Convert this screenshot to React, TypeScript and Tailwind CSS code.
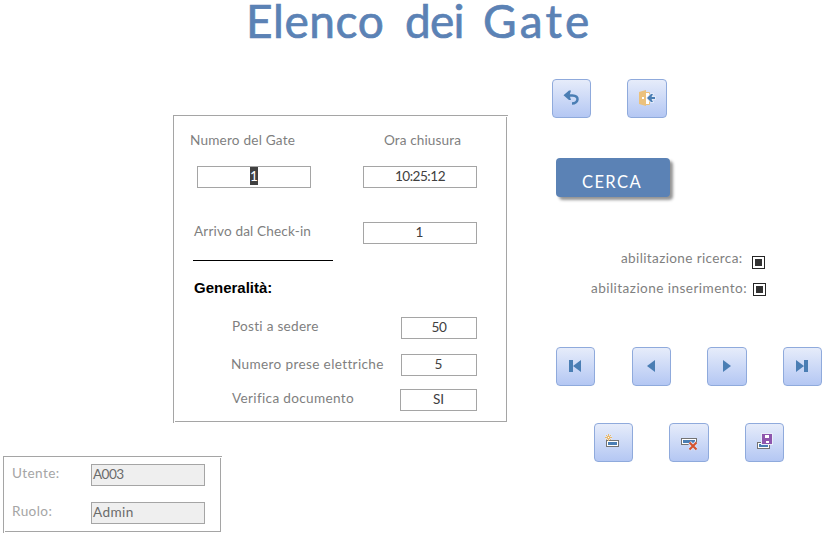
import type { ReactNode } from "react";

const BLUE = "#4a7eb4";

function Panel({ className, children }: { className: string; children: ReactNode }) {
  return (
    <section className={`relative border border-[#a5a5a5] ${className}`}>
      <i className="absolute -top-px -right-[2px] h-px w-px bg-[#a5a5a5]" />
      <i className="absolute top-0 -right-px h-px w-px bg-white" />
      <i className="absolute -bottom-[2px] -left-px h-px w-px bg-[#a5a5a5]" />
      <i className="absolute -bottom-px left-0 h-px w-px bg-white" />
      {children}
    </section>
  );
}

function Field({ className, children }: { className: string; children: ReactNode }) {
  return (
    <div className={`flex h-[22px] shrink-0 items-start border border-[#a5a5a5] text-[13.6px] leading-[18px] ${className}`}>
      {children}
    </div>
  );
}

function Label({ className, children }: { className: string; children: ReactNode }) {
  return <span className={`block h-[20px] shrink-0 whitespace-nowrap text-[13.6px] leading-[18px] [font-variant-ligatures:none] ${className}`}>{children}</span>;
}

function IconButton({ className = "", label, children }: { className?: string; label: string; children: ReactNode }) {
  return (
    <button
      aria-label={label}
      className={`h-[39px] w-[39px] shrink-0 rounded-[4px] border border-[#8faadc] bg-linear-to-b from-[#e6ecfa] to-[#b4c7f3] ${className}`}
    >
      <svg width="37" height="37" viewBox="1 1 37 37" className="block">
        {children}
      </svg>
    </button>
  );
}

function CheckBox({ className }: { className: string }) {
  return (
    <span className={`flex h-[13px] w-[13px] shrink-0 items-center justify-center border border-[#262626] bg-white ${className}`}>
      <i className="h-[7px] w-[7px] bg-[#333]" />
    </span>
  );
}

export default function App() {
  return (
    <main className="flex h-[534px] w-[825px] flex-col bg-white font-['Lato','Liberation_Sans',sans-serif] text-[#7f7f7f]">
      <h1 className="flex h-[54px] shrink-0 pl-[246px] text-[46px] leading-[42px] text-[#5b82b5] [-webkit-text-stroke:0.7px_#5b82b5]">
        <span className="w-[159px] tracking-[0.6px]">Elenco</span>
        <span className="w-[78px] tracking-[-0.8px]">dei</span>
        <span className="tracking-[3.2px]">Gate</span>
      </h1>
      <div className="flex">
        <div className="w-[552px] shrink-0 pt-[61px]">
          <Panel className="ml-[173px] h-[307px] w-[334px]">
            <div className="flex pt-[15px] pl-[16px]">
              <Label className="w-[194px] tracking-[0.2px]">Numero del Gate</Label>
              <Label className="tracking-[0.1px]">Ora chiusura</Label>
            </div>
            <div className="flex pt-[15px] pl-[23px]">
              <Field className="mr-[52px] w-[114px] justify-center">
                <span className="h-[18px] bg-[#404040] px-[0.3px] text-white">1</span>
              </Field>
              <Field className="w-[114px] justify-center tracking-[-0.5px] text-[#404040]">10:25:12</Field>
            </div>
            <div className="flex pt-[34px] pl-[20px]">
              <Label className="w-[169px] tracking-[0.15px]">Arrivo dal Check-in</Label>
              <Field className="w-[114px] justify-center pr-px text-[#404040]">1</Field>
            </div>
            <div className="mt-[16px] ml-[19px] h-px w-[140px] bg-black" />
            <h2 className="mt-[17px] ml-[20px] h-[20px] font-['Liberation_Sans',sans-serif] text-[15px] leading-[20px] font-bold text-black">
              Generalità:
            </h2>
            <div className="mt-[19px] ml-[58px] flex h-[22px]">
              <Label className="w-[169px] tracking-[0.27px]">Posti a sedere</Label>
              <Field className="w-[76px] justify-center tracking-[-0.4px] text-[#404040]">50</Field>
            </div>
            <div className="mt-[15px] ml-[57px] flex h-[22px]">
              <Label className="w-[170px] pt-px tracking-[0.35px]">Numero prese elettriche</Label>
              <Field className="w-[76px] justify-center pr-px text-[#404040]">5</Field>
            </div>
            <div className="mt-[13px] ml-[58px] flex h-[22px]">
              <Label className="w-[168px] tracking-[0.33px]">Verifica documento</Label>
              <Field className="w-[77px] justify-center text-[#404040]">SI</Field>
            </div>
          </Panel>
          <Panel className="mt-[34px] ml-[3px] h-[76px] w-[218px] text-[#a5a5a5]">
            <div className="flex pt-[7px] pl-[8px]">
              <Label className="w-[79px] tracking-[0.4px]">Utente:</Label>
              <Field className="w-[114px] bg-[#efefef] pl-px tracking-[-0.6px] text-[#6b6b6b]">A003</Field>
            </div>
            <div className="flex pt-[16px] pl-[8px]">
              <Label className="w-[79px] tracking-[0.4px]">Ruolo:</Label>
              <Field className="w-[114px] bg-[#efefef] pl-px tracking-[0.4px] text-[#6b6b6b]">Admin</Field>
            </div>
          </Panel>
        </div>

        <div className="w-[273px] shrink-0 pt-[25px]">
          <div className="flex gap-[36px]">
            <IconButton label="Annulla">
              <path d="M16 16.5H20.5C28 16.5 26.5 24.5 20 24.5" fill="none" stroke={BLUE} strokeWidth="2.5" />
              <path d="M11.5 16.2L17 11.5H19L17.5 16.2L19 21H17Z" fill={BLUE} />
            </IconButton>
            <IconButton label="Esci" className="w-[40px]">
              <path d="M18 13.5H22.5V25.5H18" fill="#fff" stroke="#ebc17d" />
              <path d="M12 13L19 11V27L12 25Z" fill="#ebc17d" />
              <rect x="15" y="18" width="2" height="2" fill="#fff" />
              <path d="M20 19L24 15H26L24.5 18H28V20H24.5L26 23H24Z" fill={BLUE} stroke="#e7edfa" strokeWidth="1.5" paintOrder="stroke" />
            </IconButton>
          </div>
          <button className="mt-[40px] ml-[4px] flex h-[39px] w-[114px] justify-center rounded-[4px] bg-[#5b82b5] pt-[14px] pr-[2px] text-[16.5px] leading-[20px] tracking-[1.4px] text-white shadow-[3px_3px_3px_rgba(0,0,0,0.42)]">
            CERCA
          </button>
          <div className="mt-[51px] ml-[69px] flex">
            <Label className="w-[131px] pt-px tracking-[0.35px]">abilitazione ricerca:</Label>
            <CheckBox className="mt-[8px]" />
          </div>
          <div className="mt-[9px] ml-[39px] flex">
            <Label className="w-[162px] pt-px tracking-[0.44px]">abilitazione inserimento:</Label>
            <CheckBox className="mt-[5px]" />
          </div>
          <div className="mt-[49px] ml-[4px] flex">
            <IconButton label="Primo record" className="mr-[37px]">
              <path d="M13 13H17V25H13ZM25 13V25L17 19Z" fill={BLUE} />
            </IconButton>
            <IconButton label="Record precedente" className="mr-[36px]">
              <path d="M23 13V25L15 19Z" fill={BLUE} />
            </IconButton>
            <IconButton label="Record successivo" className="mr-[36px] w-[40px]">
              <path d="M16 13V25L24 19Z" fill={BLUE} />
            </IconButton>
            <IconButton label="Ultimo record">
              <path d="M13 13V25L21 19ZM21 13H25V25H21Z" fill={BLUE} />
            </IconButton>
          </div>
          <div className="mt-[37px] ml-[42px] flex">
            <IconButton label="Nuovo record" className="mr-[36px] h-[38px]">
              <rect x="12.5" y="17.5" width="12" height="6" fill="#fff" stroke="#737373" />
              <rect x="14" y="19" width="9" height="3" fill={BLUE} />
              <path d="M11 11H18V17H11Z" fill="#dce5f8" />
              <path d="M14.5 11V18M11 14.5H18M12 12L17 17M17 12L12 17" stroke="#ebb96a" />
              <rect x="14" y="14" width="1" height="1" fill="#fff" />
            </IconButton>
            <IconButton label="Elimina record" className="mr-[36px] w-[40px]">
              <rect x="12.5" y="15.5" width="15" height="6" fill="#fff" stroke="#737373" />
              <rect x="14" y="17" width="12" height="3" fill={BLUE} />
              <path d="M20.5 19.5L27.5 26.5M27.5 19.5L20.5 26.5" stroke="#d5dff8" strokeWidth="4" />
              <path d="M20.5 19.5L27.5 26.5M27.5 19.5L20.5 26.5" stroke="#d6532d" strokeWidth="2" />
            </IconButton>
            <IconButton label="Salva record">
              <rect x="12.5" y="19.5" width="12" height="6" fill="#fff" stroke="#737373" />
              <rect x="14" y="21" width="9" height="3" fill={BLUE} />
              <rect x="16" y="10" width="12" height="12" fill="#e8eefa" />
              <path d="M17 11H27V21H17Z" fill="#8e56ad" />
              <path d="M20 12H24V15H20ZM21 18H24V20H21Z" fill="#fff" />
            </IconButton>
          </div>
        </div>
      </div>
    </main>
  );
}
